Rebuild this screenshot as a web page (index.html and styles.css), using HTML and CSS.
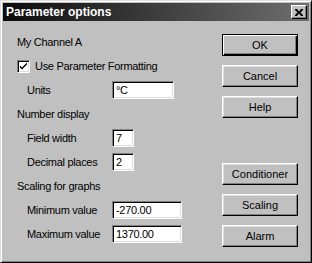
FILE: index.html
```html
<!DOCTYPE html>
<html lang="en">
<head>
    <meta charset="UTF-8">
    <meta name="viewport" content="width=device-width, initial-scale=1.0">
    <title>Parameter options</title>
    <link rel="stylesheet" href="styles.css">
</head>
<body>
    <div class="window">
        <div class="titlebar">
            <span class="title">Parameter options</span>
            <span class="close">
                <svg width="8" height="7" viewBox="0 0 8 7"><path d="M0 0h2l2 2.5 2-2.5h2v1l-2.5 2.5 2.5 2.5v1h-2l-2-2.5-2 2.5h-2v-1l2.5-2.5-2.5-2.5z" fill="#000"/></svg>
            </span>
        </div>
        <div class="content">
            <div class="fields">
                <div class="row">My Channel A</div>
                <div class="row">
                    <span class="checkbox">
                        <svg width="9" height="9" viewBox="0 0 9 9"><path d="M1 3.5l2 2 5-5v2l-5 5-2-2z" fill="#000"/></svg>
                    </span>
                    Use Parameter Formatting
                </div>
                <div class="row sub"><span class="label">Units</span><span class="field units">°C</span></div>
                <div class="row">Number display</div>
                <div class="row sub"><span class="label">Field width</span><span class="field small">7</span></div>
                <div class="row sub"><span class="label">Decimal places</span><span class="field small">2</span></div>
                <div class="row">Scaling for graphs</div>
                <div class="row sub"><span class="label">Minimum value</span><span class="field wide">-270.00</span></div>
                <div class="row sub"><span class="label">Maximum value</span><span class="field wide">1370.00</span></div>
            </div>
            <div class="buttons">
                <div class="group">
                    <button class="default">OK</button>
                    <button>Cancel</button>
                    <button>Help</button>
                </div>
                <div class="group">
                    <button>Conditioner</button>
                    <button>Scaling</button>
                    <button>Alarm</button>
                </div>
            </div>
        </div>
    </div>
</body>
</html>
```

FILE: styles.css
```css
body { margin: 0; background-color: #c0c0c0; font-family: "Liberation Sans", Arial, sans-serif; font-size: 11px; letter-spacing: -0.3px; color: #000; }
.window { width: 312px; height: 263px; box-sizing: border-box; display: flex; flex-direction: column; background-color: #c0c0c0; border: 1px solid; border-color: #dfdfdf #000 #000 #dfdfdf; box-shadow: inset 1px 1px #fff, inset -1px -1px #808080; padding: 2px; }
.titlebar { height: 18px; display: flex; align-items: center; justify-content: space-between; padding: 0 2px 0 3px; background: linear-gradient(to right, #0c0c0c, #6e6e6e); }
.title { color: #fff; font-weight: bold; font-size: 12px; letter-spacing: 0; }
.close { width: 16px; height: 14px; box-sizing: border-box; display: flex; align-items: center; justify-content: center; background-color: #c0c0c0; border: 1px solid; border-color: #fff #000 #000 #fff; box-shadow: inset -1px -1px #808080; }
.content { flex: 1; display: flex; padding: 9px 11px 13px 14px; }
.fields { flex: 1; display: flex; flex-direction: column; }
.row { height: 24px; display: flex; align-items: center; }
.row.sub { padding-left: 10px; }
.label { width: 85px; }
.checkbox { width: 13px; height: 13px; box-sizing: border-box; margin-right: 5px; display: flex; align-items: center; justify-content: center; background-color: #fff; border: 1px solid; border-color: #808080 #fff #fff #808080; box-shadow: inset 1px 1px #000, inset -1px -1px #dfdfdf; }
.field { height: 18px; box-sizing: border-box; display: flex; align-items: center; padding-left: 3px; background-color: #fff; border: 1px solid; border-color: #808080 #fff #fff #808080; box-shadow: inset 1px 1px #000, inset -1px -1px #dfdfdf; }
.units { width: 62px; }
.small { width: 22px; }
.wide { width: 70px; }
.buttons { width: 76px; display: flex; flex-direction: column; justify-content: space-between; padding-top: 4px; }
.group { display: flex; flex-direction: column; gap: 9px; }
button { height: 22px; padding: 0; margin: 0; font: inherit; color: #000; background-color: #c0c0c0; border: 1px solid; border-color: #fff #000 #000 #fff; box-shadow: inset -1px -1px #808080, inset 1px 1px #dfdfdf; }
button.default { border: 1px solid #000; box-shadow: inset 1px 1px #fff, inset -1px -1px #000, inset -2px -2px #808080; }
```
